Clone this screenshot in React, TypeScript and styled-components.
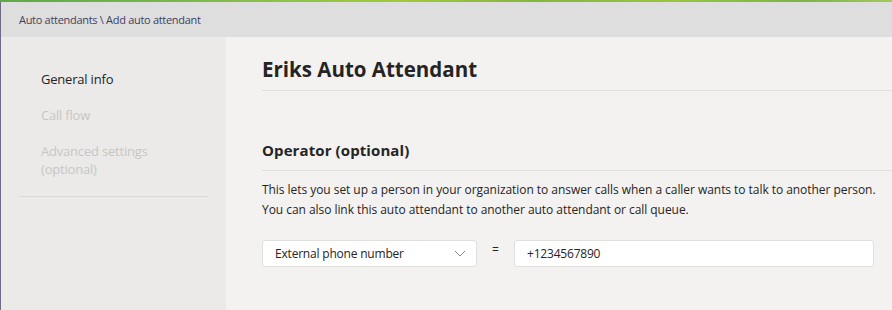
import React from 'react';
import styled, { createGlobalStyle } from 'styled-components';


const GlobalStyle = createGlobalStyle`
    html, body {
        margin: 0;
        padding: 0;
        width: 892px;
        height: 310px;
        overflow: hidden;
        background: #f3f2f1;
        font-family: "Open Sans", "Noto Sans", sans-serif;
        color: #252423;
    }
`;

const Page = styled.div`
    display: flex;
    flex-direction: column;
    width: 892px;
    height: 310px;
`;

const Stripe = styled.div`
    height: 2px;
    flex: none;
    background: linear-gradient(90deg, #5fa849 0%, #77b84a 20%, #8dc04a 30%, #a0c940 45%, #86b440 60%, #98c642 75%, #7fb244 90%, #a3c95b 100%);
`;

const Frame = styled.div`
    flex: 1;
    display: flex;
    flex-direction: column;
    border-left: 1px solid #6d6c86;
    min-height: 0;
`;

const Header = styled.div`
    height: 35px;
    flex: none;
    display: flex;
    align-items: center;
    padding-left: 18px;
    background: #dedede;
`;

const Crumb = styled.span`
    font-size: 11px;
    color: #3f3e5e;
    letter-spacing: -0.3px;
`;

const Body = styled.div`
    flex: 1;
    display: flex;
    flex-direction: row;
    min-height: 0;
`;

const Sidebar = styled.nav`
    width: 225px;
    flex: none;
    background: #ebeae8;
    padding: 33px 18px 0;
    box-sizing: border-box;
`;

const NavList = styled.div`
    display: flex;
    flex-direction: column;
    gap: 18px;
    padding-left: 22px;
`;

const NavItem = styled.div<{ active ?: boolean }>`
    font-size: 13px;
    line-height: 18px;
    letter-spacing: -0.2px;
    color: ${p => p.active ? '#252423' : '#c8c6c4'};
    width: 130px;
`;

const NavDivider = styled.div`
    height: 1px;
    background: #dcdbd9;
    margin-top: 18px;
`;

const Main = styled.main`
    flex: 1;
    padding: 18px 0 0 36px;
    box-sizing: border-box;
`;

const Title = styled.h1`
    margin: 0;
    font-size: 20.5px;
    line-height: 28px;
    font-weight: 700;
    letter-spacing: 0;
    padding-bottom: 7px;
    border-bottom: 1px solid #e0dfdd;
`;

const SectionTitle = styled.h2`
    margin: 48px 0 0;
    font-size: 15px;
    line-height: 22px;
    font-weight: 700;
    letter-spacing: 0.1px;
    padding-bottom: 9px;
    border-bottom: 1px solid #e0dfdd;
`;

const Text = styled.p`
    margin: 9px 0 0;
    font-size: 12px;
    line-height: 20px;
    letter-spacing: -0.05px;
    color: #252423;
`;

const FieldRow = styled.div`
    display: flex;
    align-items: flex-start;
    margin-top: 20px;
    padding-right: 18px;
`;

const Select = styled.div`
    width: 215px;
    height: 27px;
    box-sizing: border-box;
    display: flex;
    align-items: center;
    justify-content: space-between;
    padding: 0 10px 0 12px;
    background: #ffffff;
    border: 1px solid #e1dfdd;
    border-radius: 3px;
    font-size: 12px;
    letter-spacing: -0.2px;
`;

const Equals = styled.span`
    width: 37px;
    text-align: center;
    font-size: 12px;
    line-height: 20px;
    flex: none;
`;

const Input = styled.div`
    flex: 1;
    height: 27px;
    box-sizing: border-box;
    display: flex;
    align-items: center;
    padding: 0 12px;
    background: #ffffff;
    border: 1px solid #e1dfdd;
    border-radius: 3px;
    font-size: 12px;
    letter-spacing: -0.2px;
`;

const Chevron = () => (
    <svg width="12" height="7" viewBox="0 0 12 7">
        <path d="M1 1 L6 6 L11 1" fill="none" stroke="#8a8886" strokeWidth="1" />
    </svg>
);

export default function App() : JSX.Element
{
    return (
        <>
            <GlobalStyle />
            <Page>
                <Stripe />
                <Frame>
                    <Header>
                        <Crumb>Auto attendants \ Add auto attendant</Crumb>
                    </Header>
                    <Body>
                        <Sidebar>
                            <NavList>
                                <NavItem active>General info</NavItem>
                                <NavItem>Call flow</NavItem>
                                <NavItem>Advanced settings (optional)</NavItem>
                            </NavList>
                            <NavDivider />
                        </Sidebar>
                        <Main>
                            <Title>Eriks Auto Attendant</Title>
                            <SectionTitle>Operator (optional)</SectionTitle>
                            <Text>
                                This lets you set up a person in your organization to answer calls when a caller wants to talk to another person.
                                <br />
                                You can also link this auto attendant to another auto attendant or call queue.
                            </Text>
                            <FieldRow>
                                <Select>
                                    <span>External phone number</span>
                                    <Chevron />
                                </Select>
                                <Equals>=</Equals>
                                <Input>+1234567890</Input>
                            </FieldRow>
                        </Main>
                    </Body>
                </Frame>
            </Page>
        </>
    );
}
